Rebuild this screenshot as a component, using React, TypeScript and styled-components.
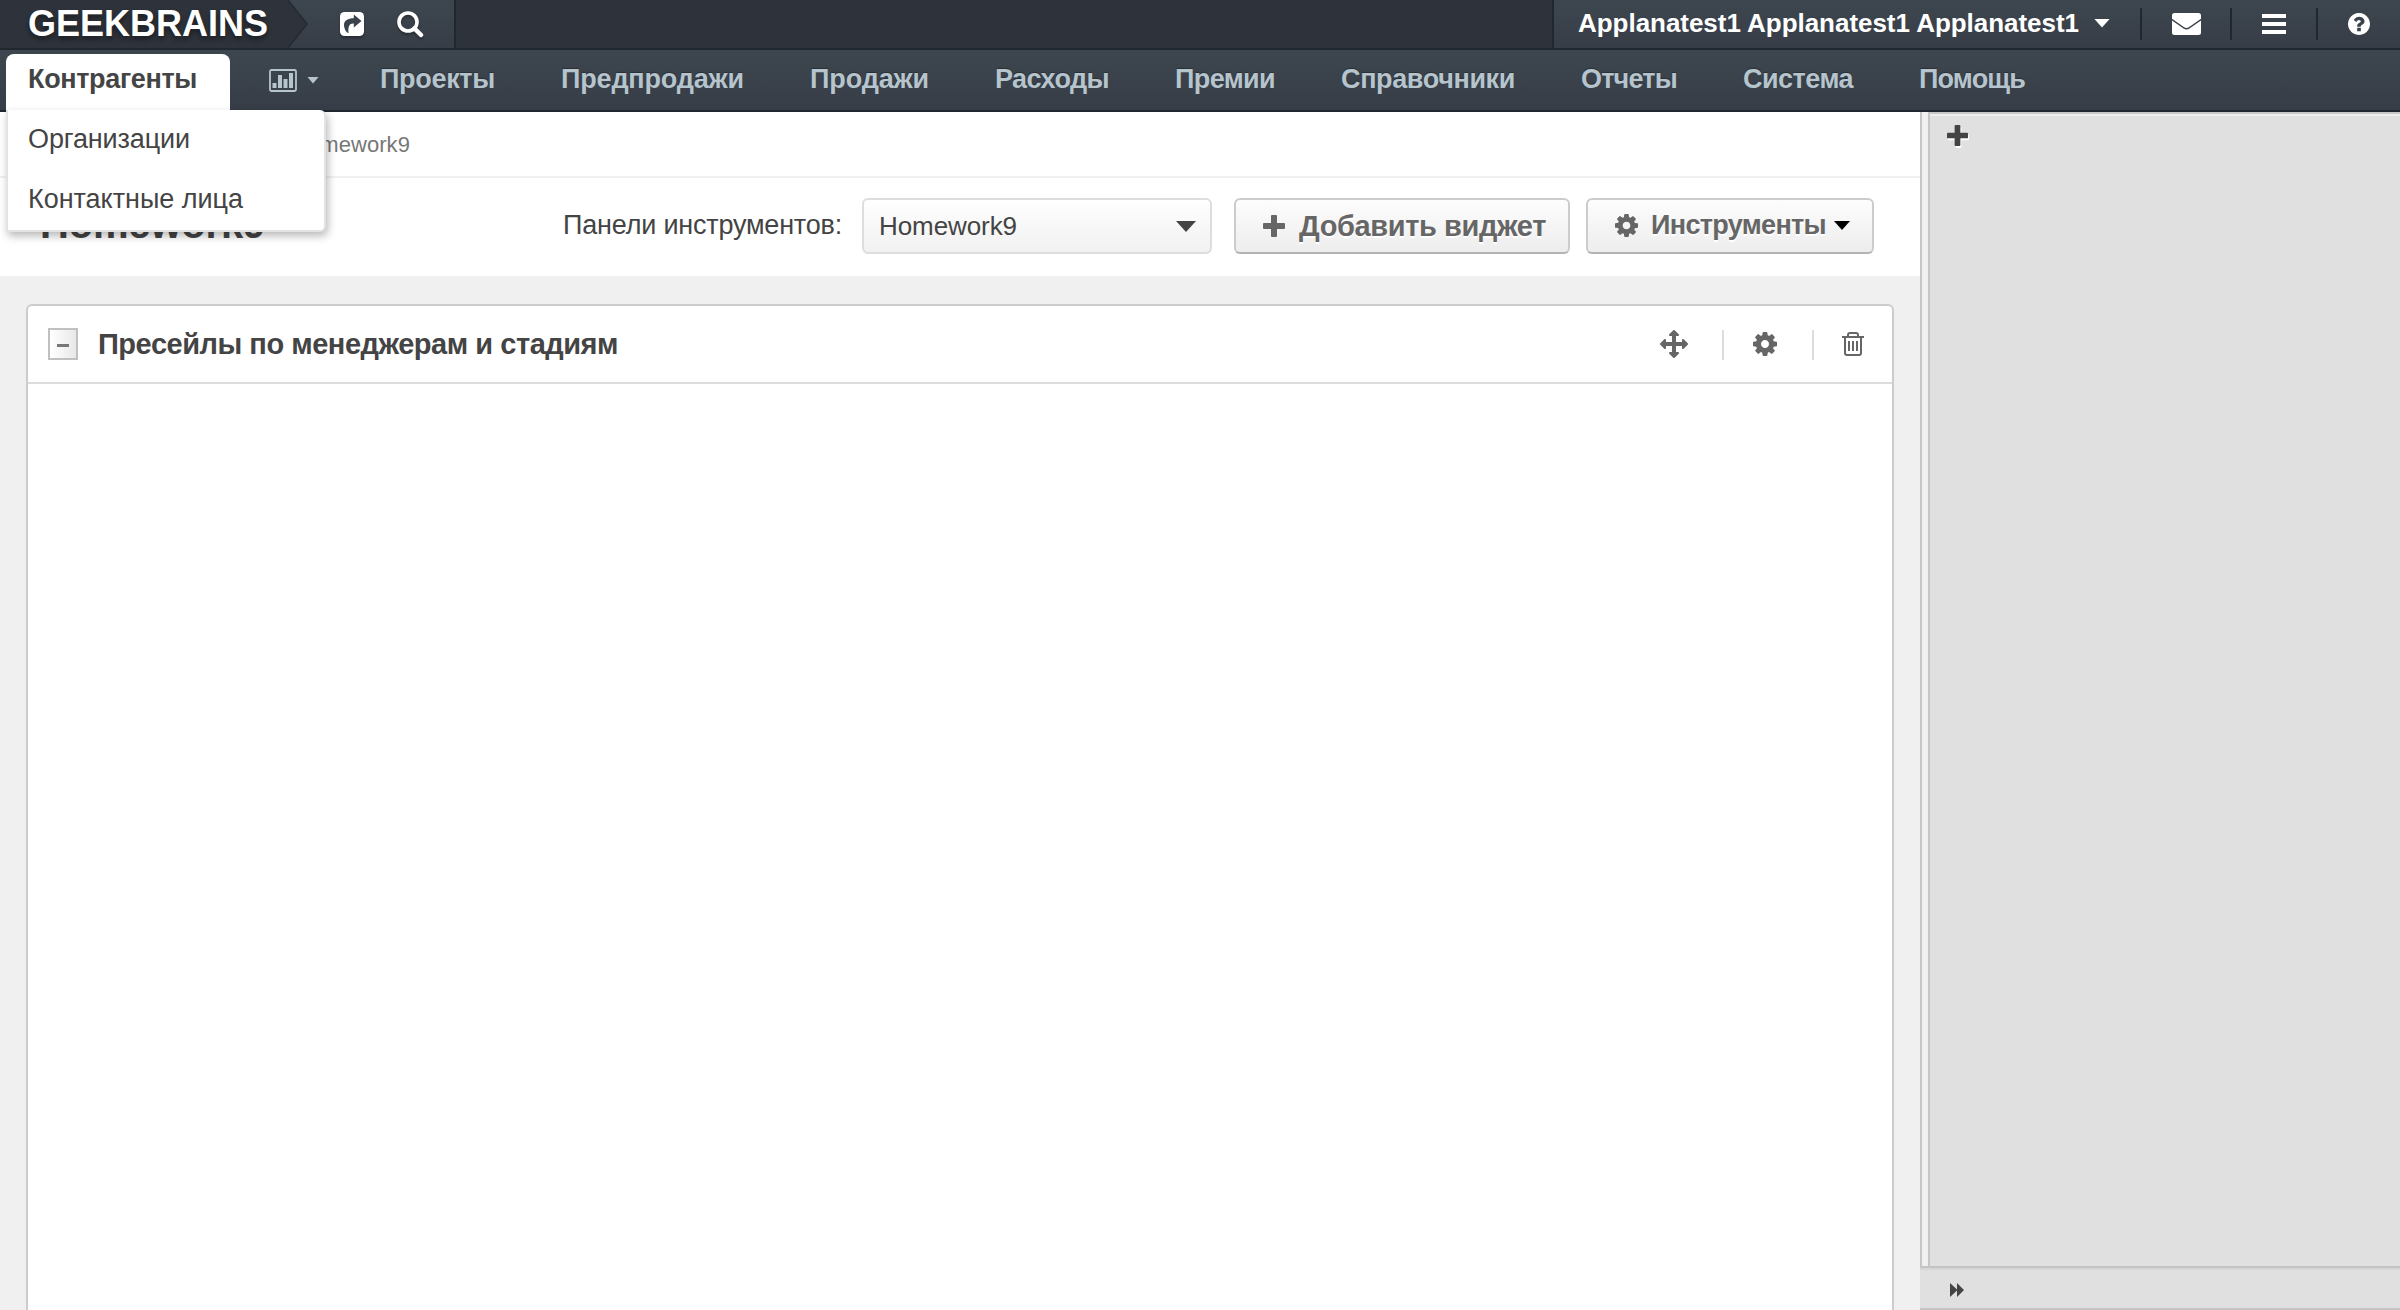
import React from "react";
import styled, { createGlobalStyle } from "styled-components";

const Global = createGlobalStyle`
  * { box-sizing: border-box; }
  html, body { margin: 0; padding: 0; }
  body { overflow: hidden; font-family: "Liberation Sans", Arial, sans-serif; color: #444; background: #f0f0f0; }
  svg { display: block; flex: none; }
`;

const Page = styled.div`
  width: 2400px;
  height: 1310px;
  display: flex;
  flex-direction: column;
  overflow: hidden;
`;

const TopBar = styled.header`
  height: 50px;
  flex: none;
  display: flex;
  background: #2e323a;
  border-bottom: 2px solid #20272e;
`;

const Brand = styled.div`
  width: 288px;
  height: 48px;
  padding: 0 0 0 28px;
  display: flex;
  align-items: center;
  color: #fff;
  font-weight: 700;
  text-shadow: 0 3px 5px rgba(0, 0, 0, 0.45);
`;

const Fit = styled.span<{ w: number; size: number }>`
  display: block;
  width: ${(p) => p.w}px;
  font-size: ${(p) => p.size}px;
  white-space: nowrap;
  text-align: left;
`;

const QuickTools = styled.div`
  width: 168px;
  height: 48px;
  display: flex;
  align-items: center;
  background: linear-gradient(#3d464e, #373d47);
  border-right: 2px solid #20272e;
  color: #fff;
`;

const ArrowEdge = styled.svg`
  width: 22px;
  height: 48px;
  margin-right: 30px;
`;

const QuickIcons = styled.div`
  display: flex;
  align-items: center;
  gap: 33px;
  filter: drop-shadow(0 2px 1px rgba(0, 0, 0, 0.3));
`;

const UserBar = styled.div`
  width: 848px;
  height: 48px;
  margin-left: auto;
  display: flex;
  align-items: center;
  background: linear-gradient(#3d464e, #373d47);
  border-left: 2px solid #20272e;
  color: #fff;
`;

const UserName = styled.div`
  width: 586px;
  height: 48px;
  padding: 0 0 2px 24px;
  display: flex;
  align-items: center;
  gap: 15px;
  font-weight: 700;
`;

const UserCell = styled.div<{ w: number }>`
  width: ${(p) => p.w}px;
  height: 32px;
  display: flex;
  align-items: center;
  justify-content: center;
  border-left: 2px solid #20272e;
`;

const Caret = styled.i<{ w: number; h: number; c: string }>`
  flex: none;
  width: ${(p) => p.w}px;
  height: ${(p) => p.h}px;
  background: ${(p) => p.c};
  clip-path: polygon(0 0, 100% 0, 50% 100%);
`;

const NavBar = styled.nav`
  height: 62px;
  flex: none;
  display: flex;
  align-items: stretch;
  padding-left: 6px;
  background: linear-gradient(#3d464e, #373d47);
  border-bottom: 2px solid #20272e;
`;

const ActiveTab = styled.div`
  position: relative;
  z-index: 5;
  width: 224px;
  height: 58px;
  margin-top: 4px;
  padding: 10px 0 0 22px;
  background: #fff;
  border-radius: 8px 8px 0 0;
  color: #444;
  font-weight: 700;
`;

const Dropdown = styled.div`
  position: absolute;
  left: 0;
  top: 56px;
  width: 320px;
  height: 122px;
  display: flex;
  flex-direction: column;
  background: #fff;
  border: 2px solid #e3e3e3;
  border-top: 0;
  border-radius: 0 6px 6px 0;
  box-shadow: 2px 4px 8px rgba(0, 0, 0, 0.28);
  font-weight: 400;
`;

const DropItem = styled.div`
  height: 60px;
  padding: 14px 0 0 20px;
`;

const ChartTab = styled.div`
  width: 150px;
  padding: 0 0 0 39px;
  display: flex;
  align-items: center;
  gap: 10px;
  color: #b6c4cd;
`;

const NavItem = styled.div<{ gap: number }>`
  margin-right: ${(p) => p.gap}px;
  padding-top: 14px;
  color: #b6c4cd;
  font-weight: 700;
  text-shadow: 0 -1px 1px rgba(0, 0, 0, 0.3);
`;

const Body = styled.div`
  flex: 1;
  min-height: 0;
  display: flex;
`;

const Main = styled.main`
  width: 1920px;
  display: flex;
  flex-direction: column;
  background: #f0f0f0;
`;

const Crumbs = styled.div`
  height: 66px;
  flex: none;
  padding: 20px 0 0 292px;
  background: #fff;
  border-bottom: 2px solid #f0f0f0;
  color: #777;
`;

const TitleRow = styled.div`
  height: 98px;
  flex: none;
  display: flex;
  align-items: center;
  padding: 0 0 2px 40px;
  background: #fff;
`;

const Title = styled.h1`
  margin: 0 298px 0 0;
  padding-bottom: 4px;
  font-weight: 700;
`;

const Label = styled.div`
  margin-right: 20px;
  padding-bottom: 2px;
`;

const Select = styled.div`
  width: 350px;
  height: 56px;
  margin-right: 22px;
  padding: 1px 14px 0 15px;
  display: flex;
  align-items: center;
  justify-content: space-between;
  border: 2px solid #ddd;
  border-radius: 6px;
  background: linear-gradient(#fff, #f1f1f1);
`;

const Button = styled.div<{ w: number; pad: number; gap: number }>`
  width: ${(p) => p.w}px;
  height: 56px;
  margin-right: 16px;
  padding-left: ${(p) => p.pad}px;
  padding-bottom: 1px;
  display: flex;
  align-items: center;
  gap: ${(p) => p.gap}px;
  border: 2px solid #ccc;
  border-bottom-color: #b3b3b3;
  border-radius: 6px;
  background: linear-gradient(#fdfdfd, #ededed);
  color: #666;
  font-weight: 700;
  text-shadow: 0 2px 0 #fff;
`;

const ButtonLabel = styled.div<{ drop?: number }>`
  display: flex;
  align-items: center;
  gap: 8px;
  padding-top: ${(p) => p.drop ?? 0}px;
`;

const Widget = styled.section`
  flex: 1;
  margin: 28px 26px 0;
  border: 2px solid #ccc;
  border-bottom: 0;
  border-radius: 6px 6px 0 0;
  background: #fff;
`;

const WidgetHead = styled.div`
  height: 78px;
  display: flex;
  align-items: center;
  padding: 0 28px 0 20px;
  border-bottom: 2px solid #ddd;
  color: #666;
`;

const Collapse = styled.div`
  width: 30px;
  height: 32px;
  margin-right: 20px;
  display: flex;
  align-items: center;
  justify-content: center;
  border: 2px solid #c0c0c0;
  background: linear-gradient(90deg, #fff, #e8e8e8);
`;

const Minus = styled.i`
  width: 12px;
  height: 3px;
  margin-top: 2px;
  background: #777;
`;

const WidgetTitle = styled.h2`
  flex: 1;
  margin: 0;
  color: #444;
  font-weight: 700;
`;

const Divider = styled.i<{ l: number; r: number }>`
  width: 2px;
  height: 30px;
  margin: 2px ${(p) => p.r}px 0 ${(p) => p.l}px;
  background: #ddd;
`;

const Side = styled.aside`
  width: 480px;
  display: flex;
  flex-direction: column;
`;

const SideTop = styled.div`
  flex: 1;
  display: flex;
`;

const Splitter = styled.div`
  width: 10px;
  border: 2px solid #c6c6c6;
  border-width: 0 2px;
  background: #f0f0f0;
`;

const SideArea = styled.div`
  flex: 1;
  padding: 13px 0 0 17px;
  background: #e0e0e0;
  color: #444;
  box-shadow: inset 0 2px 0 #c8c8c8, inset 0 4px 0 #eee;

  svg { filter: drop-shadow(1px 2px 0 #fff); }
`;

const SideFoot = styled.div`
  height: 44px;
  display: flex;
  align-items: center;
  padding: 4px 0 0 30px;
  background: #e0e0e0;
  border-top: 2px solid #c4c4c4;
  border-bottom: 2px solid #c4c4c4;
  box-shadow: inset 0 2px 0 #d6d6d6;
`;

type TProps = { w: number; s: number; children: string };

/* Sets a run of text in its slot; letter widths are spread evenly over the slot. */
function T({ w, s, children }: TProps) {
  const ref = React.useRef<HTMLSpanElement>(null);
  React.useLayoutEffect(() => {
    const el = ref.current;
    if (!el) return;
    el.style.letterSpacing = "0px";
    const range = document.createRange();
    range.selectNodeContents(el);
    const natural = range.getBoundingClientRect().width;
    el.style.letterSpacing = (w - natural) / children.length + "px";
  }, [w, s, children]);
  return <Fit ref={ref} w={w} size={s}>{children}</Fit>;
}

const Cog = ({ s }: { s: number }) => (
  <svg width={s} height={s} viewBox="0 128 1536 1536" fill="currentColor">
    <path d="M1024 896q0-106-75-181t-181-75-181 75-75 181 75 181 181 75 181-75 75-181zm512-109v222q0 12-8 23t-20 13l-185 28q-19 54-39 91 35 50 107 138 10 12 10 25t-9 23q-27 37-99 108t-94 71q-12 0-26-9l-138-108q-44 23-91 38-16 136-29 186-7 28-36 28h-222q-14 0-24.5-8.5t-11.5-21.5l-28-184q-49-16-90-37l-141 107q-10 9-25 9-14 0-25-11-126-114-165-168-7-10-7-23 0-12 8-23 15-21 51-66.5t54-70.5q-27-50-41-99l-183-27q-13-2-21-12.5t-8-23.5v-222q0-12 8-23t19-13l186-28q14-46 39-92-40-57-107-138-10-12-10-24 0-10 9-23 26-36 98.5-107.5t94.5-71.5q13 0 26 10l138 107q44-23 91-38 16-136 29-186 7-28 36-28h222q14 0 24.5 8.5t11.5 21.5l28 184q49 16 90 37l142-107q9-9 24-9 13 0 25 10 129 119 165 170 7 8 7 22 0 12-8 23-15 21-51 66.5t-54 70.5q26 50 41 98l183 28q13 2 21 12.5t8 23.5z" />
  </svg>
);

const Move = () => (
  <svg width="28" height="28" viewBox="0 0 1792 1792" fill="currentColor">
    <path d="M1792 896q0 26-19 45l-256 256q-19 19-45 19t-45-19-19-45v-128h-384v384h128q26 0 45 19t19 45-19 45l-256 256q-19 19-45 19t-45-19l-256-256q-19-19-19-45t19-45 45-19h128v-384h-384v128q0 26-19 45t-45 19-45-19l-256-256q-19-19-19-45t19-45l256-256q19-19 45-19t45 19 19 45v128h384v-384h-128q-26 0-45-19t-19-45 19-45l256-256q19-19 45-19t45 19l256 256q19 19 19 45t-19 45-45 19h-128v384h384v-128q0-26 19-45t45-19 45 19l256 256q19 19 19 45z" />
  </svg>
);

const Trash = () => (
  <svg width="22" height="24" viewBox="0 0 22 24" fill="none" stroke="currentColor" strokeWidth="2">
    <path d="M0 5h22M6 5V3q0-2 2-2h6q2 0 2 2v2M3 5v16q0 2 2 2h12q2 0 2-2V5M7 9v10M11 9v10M15 9v10" />
  </svg>
);

const Plus = ({ s }: { s: number }) => (
  <svg width={s} height={s} viewBox="0 0 22 22" fill="currentColor">
    <path d="M9 0h4q1 0 1 1v7h7q1 0 1 1v4q0 1-1 1h-7v7q0 1-1 1H9q-1 0-1-1v-7H1q-1 0-1-1V9q0-1 1-1h7V1q0-1 1-1z" />
  </svg>
);

const Share = () => (
  <svg width="24" height="24" viewBox="0 0 24 24">
    <rect width="24" height="24" rx="4.5" fill="#fff" />
    <path d="M13.800 2.500L21.500 9l-7.700 6.500V11.500C10 11 7.800 13.500 8.500 21C7 21.500 4 17 4 13C4 8.500 8 6.300 13.800 6.300z" fill="#3a424b" />
  </svg>
);

const Search = () => (
  <svg width="27" height="27" viewBox="0 0 27 27" fill="none" stroke="#fff">
    <circle cx="11" cy="11" r="9" strokeWidth="3.6" />
    <path d="M17.500 17.500L24 24" strokeWidth="4.500" strokeLinecap="round" />
  </svg>
);

const Chart = () => (
  <svg width="28" height="23" viewBox="0 0 28 23">
    <rect x="1" y="1" width="26" height="21" rx="1.500" fill="none" stroke="currentColor" strokeWidth="1.800" />
    <path d="M3.500 14h4v5h-4zM9 6h4v13h-4zM14.500 10h4v9h-4zM20 4h4v15h-4z" fill="currentColor" />
  </svg>
);

const Envelope = () => (
  <svg width="29" height="22" viewBox="0 0 29 22" fill="#fff">
    <path d="M2.500 0h24Q29 0 29 2.500v3.200L17.200 14q-2.700 2-5.400 0L0 5.700V2.500Q0 0 2.500 0z" />
    <path d="M0 7.400L11.500 15.600q3 2 6 0L29 7.400v12.100q0 2.500-2.500 2.500h-24Q0 22 0 19.500z" />
  </svg>
);

const Bars = () => (
  <svg width="24" height="20" viewBox="0 0 24 20" fill="#fff">
    <path d="M0 0h24v4H0zM0 8h24v4H0zM0 16h24v4H0z" />
  </svg>
);

const Question = () => (
  <svg width="22" height="22" viewBox="0 128 1536 1536" fill="#fff">
    <path d="M896 1376v-192q0-14-9-23t-23-9h-192q-14 0-23 9t-9 23v192q0 14 9 23t23 9h192q14 0 23-9t9-23zm256-672q0-88-55.500-163t-138.500-116-170-41q-243 0-371 213-15 24 8 42l132 100q7 6 19 6 16 0 25-12 53-68 86-92 34-24 86-24 48 0 85.500 26t37.500 59q0 38-20 61t-68 45q-63 28-115.500 86.500t-52.500 125.500v36q0 14 9 23t23 9h192q14 0 23-9t9-23q0-19 21.500-49.500t54.500-49.500q32-18 49-28.500t46-35 44.500-48 28-60.500 12.500-81zm384 192q0 209-103 385.500t-279.500 279.500-385.500 103-385.500-103-279.500-279.500-103-385.500 103-385.500 279.500-279.500 385.500-103 385.500 103 279.500 279.500 103 385.500z" />
  </svg>
);

const FastForward = () => (
  <svg width="14" height="14" viewBox="0 0 14 14" fill="#444">
    <path d="M0 0l7 6.500V0l7 7-7 7V7.500L0 14z" />
  </svg>
);

const nav: [string, number, number][] = [
  ["Проекты", 115, 66],
  ["Предпродажи", 183, 66],
  ["Продажи", 119, 66],
  ["Расходы", 114, 66],
  ["Премии", 100, 66],
  ["Справочники", 174, 66],
  ["Отчеты", 96, 66],
  ["Система", 110, 66],
  ["Помощь", 106, 0],
];

export default function App() {
  return (
    <Page>
      <Global />
      <TopBar>
        <Brand><T w={240} s={36}>GEEKBRAINS</T></Brand>
        <QuickTools>
          <ArrowEdge viewBox="0 0 22 48">
            <path d="M0 0L19 24L0 48z" fill="#2e323a" />
            <path d="M0 0L19 24L0 48" fill="none" stroke="#262b32" strokeWidth="1.500" />
          </ArrowEdge>
          <QuickIcons>
            <Share />
            <Search />
          </QuickIcons>
        </QuickTools>
        <UserBar>
          <UserName>
            <T w={501} s={26}>Applanatest1 Applanatest1 Applanatest1</T>
            <Caret w={16} h={9} c="#fff" />
          </UserName>
          <UserCell w={90}><Envelope /></UserCell>
          <UserCell w={86}><Bars /></UserCell>
          <UserCell w={83}><Question /></UserCell>
        </UserBar>
      </TopBar>
      <NavBar>
        <ActiveTab>
          <T w={169} s={27}>Контрагенты</T>
          <Dropdown>
            <DropItem><T w={162} s={27}>Организации</T></DropItem>
            <DropItem><T w={215} s={27}>Контактные лица</T></DropItem>
          </Dropdown>
        </ActiveTab>
        <ChartTab><Chart /><Caret w={12} h={7} c="#b6c4cd" /></ChartTab>
        {nav.map(([label, w, gap]) => (
          <NavItem key={label} gap={gap}><T w={w} s={27}>{label}</T></NavItem>
        ))}
      </NavBar>
      <Body>
        <Main>
          <Crumbs><T w={118} s={22}>Homework9</T></Crumbs>
          <TitleRow>
            <Title><T w={225} s={40}>Homework9</T></Title>
            <Label><T w={279} s={27}>Панели инструментов:</T></Label>
            <Select><T w={138} s={26}>Homework9</T><Caret w={20} h={11} c="#444" /></Select>
            <Button w={336} pad={27} gap={14}>
              <Plus s={22} />
              <ButtonLabel drop={2}><T w={247} s={29}>Добавить виджет</T></ButtonLabel>
            </Button>
            <Button w={288} pad={27} gap={13}>
              <Cog s={23} />
              <ButtonLabel><T w={175} s={27}>Инструменты</T><Caret w={16} h={9} c="#000" /></ButtonLabel>
            </Button>
          </TitleRow>
          <Widget>
            <WidgetHead>
              <Collapse><Minus /></Collapse>
              <WidgetTitle><T w={520} s={29}>Пресейлы по менеджерам и стадиям</T></WidgetTitle>
              <Move />
              <Divider l={34} r={29} />
              <Cog s={24} />
              <Divider l={35} r={28} />
              <Trash />
            </WidgetHead>
          </Widget>
        </Main>
        <Side>
          <SideTop>
            <Splitter />
            <SideArea><Plus s={21} /></SideArea>
          </SideTop>
          <SideFoot><FastForward /></SideFoot>
        </Side>
      </Body>
    </Page>
  );
}
